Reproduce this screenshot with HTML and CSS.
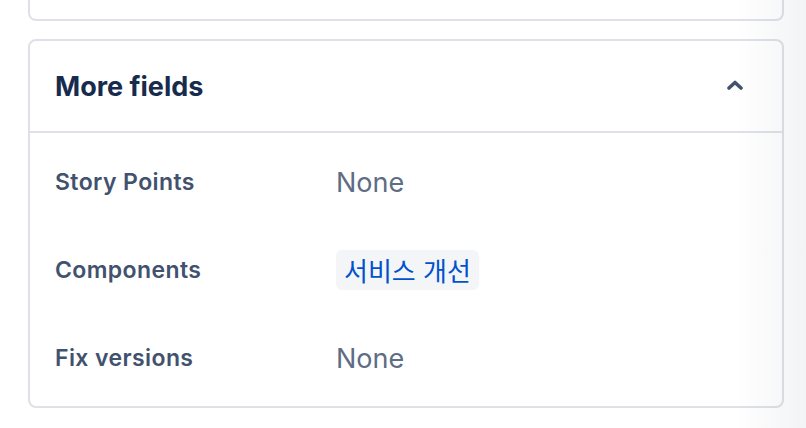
FILE: index.html
```html
<!DOCTYPE html>
<html lang="ko">
<head>
<meta charset="utf-8">
<link rel="stylesheet" href="styles.css">
</head>
<body>
<div class="page">
  <div class="card card-top"></div>
  <section class="card panel">
    <header class="panel-head">
      <h2 class="panel-title">More fields</h2>
      <svg class="chev" width="16" height="10" viewBox="0 0 16 10"><path d="M2 8 L8 2.5 L14 8" fill="none" stroke="#42526e" stroke-width="3.6" stroke-linecap="round" stroke-linejoin="round"/></svg>
    </header>
    <div class="panel-body">
      <div class="row"><span class="label">Story Points</span><span class="value">None</span></div>
      <div class="row"><span class="label">Components</span><span class="tag">서비스 개선</span></div>
      <div class="row"><span class="label">Fix versions</span><span class="value">None</span></div>
    </div>
  </section>
  <div class="shade"></div>
</div>
</body>
</html>
```
FILE: styles.css
```css
html, body {
  margin: 0;
  padding: 0;
  background: #ffffff;
}
body {
  font-family: Inter, "Noto Sans", "Noto Sans CJK KR", sans-serif;
  width: 806px;
  height: 428px;
  overflow: hidden;
}
.page {
  position: relative;
  height: 428px;
  padding: 0 22px 0 28px;
  display: flex;
  flex-direction: column;
  gap: 18px;
}
.card {
  border: 2px solid #dfe1e6;
  border-radius: 8px;
  background: #fff;
}
.card-top {
  border-top: none;
  border-radius: 0 0 8px 8px;
  height: 19px;
  flex: none;
}
.panel {
  flex: none;
}
.panel-head {
  height: 90px;
  border-bottom: 2px solid #dfe1e6;
  display: flex;
  align-items: center;
  justify-content: space-between;
  padding: 0 39px 0 25px;
}
.panel-title {
  margin: 0;
  font-size: 27px;
  font-weight: 700;
  color: #172b4d;
  letter-spacing: 0;
}
.chev {
  display: block;
  margin-top: -2px;
}
.panel-body {
  padding: 5px 25px 4px 25px;
}
.row {
  height: 88px;
  display: flex;
  align-items: center;
}
.label {
  width: 281px;
  flex: none;
  font-size: 23px;
  font-weight: 600;
  color: #42526e;
  letter-spacing: 0.4px;
}
.value {
  font-size: 27px;
  color: #5e6c84;
}
.tag {
  font-family: "Noto Sans CJK KR", sans-serif;
  background: #f4f5f7;
  color: #0052cc;
  font-size: 26px;
  border-radius: 6px;
  padding: 0 8px;
  height: 40px;
  line-height: 40px;
}
.shade {
  position: absolute;
  top: 0;
  right: 0;
  width: 72px;
  height: 100%;
  background: linear-gradient(to right, rgba(9, 30, 66, 0), rgba(9, 30, 66, 0.05));
  pointer-events: none;
}
```
